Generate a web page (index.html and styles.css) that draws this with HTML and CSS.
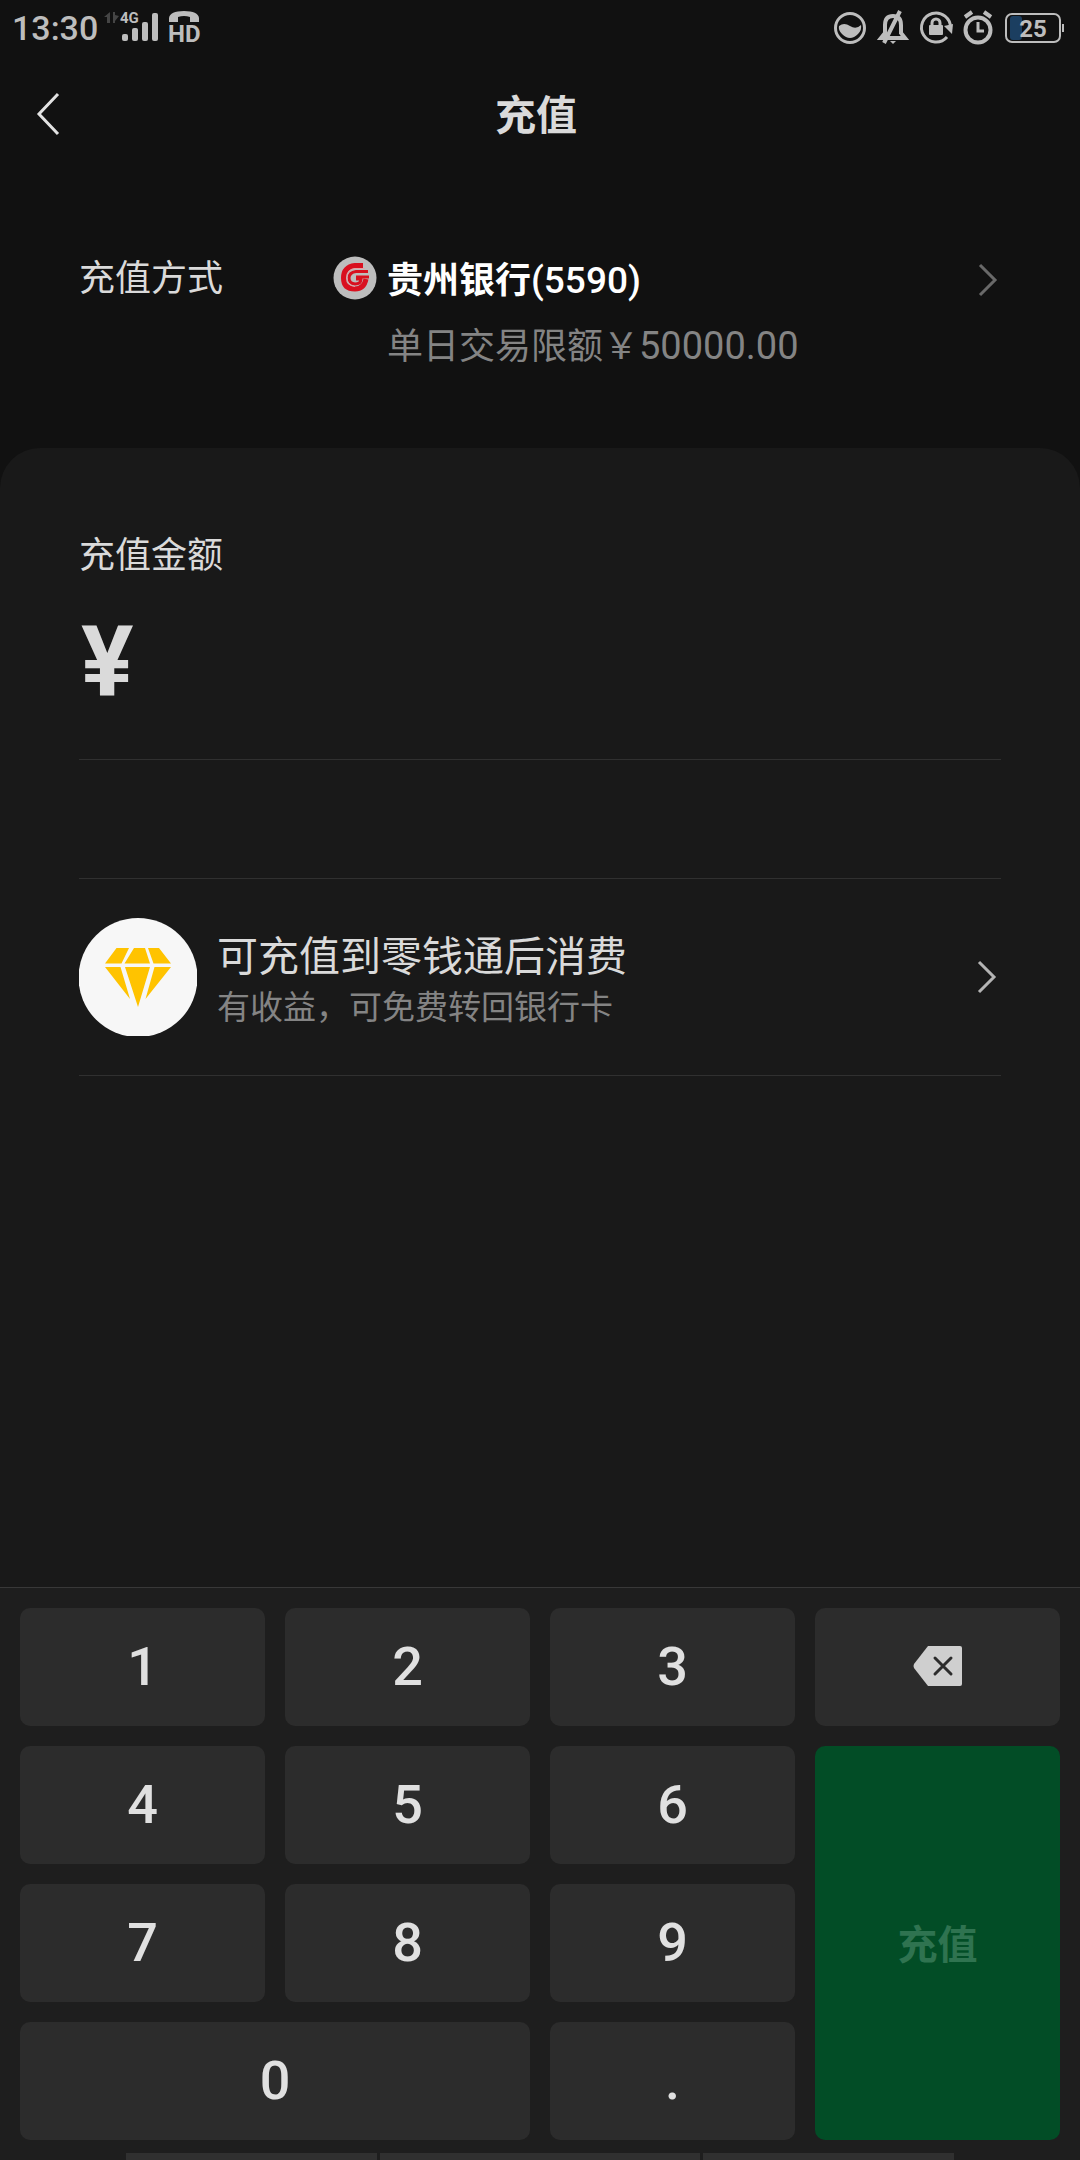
FILE: index.html
```html
<!DOCTYPE html>
<html lang="zh-CN">
<head>
<meta charset="utf-8">
<meta name="viewport" content="width=device-width, initial-scale=1">
<title>充值</title>
<link rel="stylesheet" href="styles.css">
</head>
<body>
<div class="page">
  <div class="status">
    <div class="status-side">
      <span class="clock">13:30</span>
      <svg class="signal" width="110" height="40" viewBox="0 0 110 40">
        <g fill="#454545">
          <path d="M8 4v11H5V9H2zM11 4h2v3l4 1-4 5v2h-2z"/>
        </g>
        <g fill="#bdbdbd">
          <text x="18" y="15" class="net">4G</text>
          <rect x="20" y="26" width="6" height="7" rx="2"/>
          <rect x="30" y="20" width="6" height="13" rx="2"/>
          <rect x="40" y="14" width="6" height="19" rx="2"/>
          <rect x="50" y="5" width="6" height="28" rx="2"/>
          <path d="M67 14v-4q1-7 15-7t15 7v4h-9V9q-6-2-12 0v5z"/>
          <text x="66" y="34" class="hd">HD</text>
        </g>
      </svg>
    </div>
    <div class="status-side">
      <svg class="indicators" width="234" height="40" viewBox="0 0 234 40" fill="none" stroke="#bdbdbd" stroke-width="3">
        <circle cx="20" cy="20" r="14.5"/>
        <path d="M9 18q5-4 11 0t11-1q1 5-3 9t-8 4-8-4-3-8z" fill="#bdbdbd" stroke="none"/>
        <path d="M51 30l4-5V17q0-9 8-9t8 9v8l4 5zM70 3L54 35" stroke-width="4"/>
        <path d="M60 33h6l-3 3z" fill="#bdbdbd" stroke="none"/>
        <path d="M117 29A14.500 14.500 0 1 1 120.500 20"/>
        <path d="M114 18l8 8 1-10z" fill="#bdbdbd" stroke="none"/>
        <rect x="99" y="17" width="14" height="10" rx="1" fill="#bdbdbd" stroke="none"/>
        <path d="M102 18v-3a4 4 0 0 1 8 0v3"/>
        <circle cx="148" cy="22" r="12.500" stroke-width="4"/>
        <path d="M148 14v9h6"/>
        <path d="M135 9l7-5M161 9l-7-5" stroke-width="4"/>
        <rect x="180" y="8" width="12" height="24" rx="3" fill="#1b3e60" stroke="none"/>
        <rect x="176" y="6" width="54" height="28" rx="6" stroke-width="2"/>
        <path d="M233 16v8" stroke-width="2"/>
        <text x="203" y="29" text-anchor="middle" class="battery" fill="#bdbdbd" stroke="none">25</text>
      </svg>
    </div>
  </div>

  <header class="header">
    <button class="back" type="button" aria-label="返回">
      <svg width="24" height="46" viewBox="0 0 24 46" fill="none" stroke="#e2e2e2" stroke-width="3"><path d="M22 3L3 23l19 20"/></svg>
    </button>
    <h1 class="title">充值</h1>
  </header>

  <button class="method" type="button">
    <span class="method-label">充值方式</span>
    <svg class="bank" width="44" height="44" viewBox="0 0 44 44">
      <circle cx="22" cy="22" r="21.500" fill="#bdbdbd"/>
      <g fill="none" stroke="#d9101f">
        <path d="M30 9.500H22Q10.500 11 10.500 22T22 33q9 0 11-10" stroke-width="5"/>
        <path d="M35 15.500H23q-7 1-7 6.500t6 6q6 0 6-5h-5" stroke-width="3"/>
        <path d="M23 21h13" stroke-width="3"/>
      </g>
      <path d="M32 12.500H22q-8 1-8 9 0 8 8 9" fill="none" stroke="#e6a0a4" stroke-width="1"/>
    </svg>
    <span class="method-text">
      <span class="bank-name">贵州银行<span class="digits">(5590)</span></span>
      <span class="limit">单日交易限额￥<span class="digits">50000.00</span></span>
    </span>
    <svg class="chevron" width="24" height="36" viewBox="0 0 24 36" fill="none" stroke="#696969" stroke-width="3"><path d="M3 3l15 15L3 33"/></svg>
  </button>

  <main class="card">
    <label class="amount-label" for="amount">充值金额</label>
    <div class="amount">
      <span class="yen">¥</span>
      <input class="amount-input" id="amount" type="text" inputmode="none">
    </div>
    <a class="promo" href="#">
      <svg class="gem" width="118" height="118" viewBox="0 0 118 118">
        <circle cx="59" cy="59.500" r="59.500" fill="#f7f7f7"/>
        <path fill="#ffc300" d="M37.500 30H50l-7.500 15.500H26zM55 30h11l5 15.500H45.500zM69 30h11l12 15.500H74.500zM26 49h15.500l9.500 32zM46 49h25L59 89zM75.500 49H92L66.500 81z"/>
      </svg>
      <span class="promo-text">
        <span class="promo-title">可充值到零钱通后消费</span>
        <span class="promo-sub">有收益，可免费转回银行卡</span>
      </span>
      <svg class="chevron" width="24" height="36" viewBox="0 0 24 36" fill="none" stroke="#b4b4b4" stroke-width="3"><path d="M2 3l15 15L2 33"/></svg>
    </a>
  </main>

  <section class="keypad" aria-label="数字键盘">
    <button class="key" type="button">1</button>
    <button class="key" type="button">2</button>
    <button class="key" type="button">3</button>
    <button class="key" type="button" aria-label="删除">
      <svg width="50" height="42" viewBox="0 0 50 42">
        <path d="M15 1h32q2 0 2 2v36q0 2-2 2H15L1 23q-1-2 0-4z" fill="#cfcfcf"/>
        <path d="M22 13l16 16M38 13L22 29" stroke="#2c2c2c" stroke-width="3" stroke-linecap="round"/>
      </svg>
    </button>
    <button class="key" type="button">4</button>
    <button class="key" type="button">5</button>
    <button class="key" type="button">6</button>
    <button class="key submit" type="button">充值</button>
    <button class="key" type="button">7</button>
    <button class="key" type="button">8</button>
    <button class="key" type="button">9</button>
    <button class="key zero" type="button">0</button>
    <button class="key" type="button">.</button>
  </section>
  <div class="gesture"><span></span><span></span><span></span></div>
</div>
</body>
</html>
```
FILE: styles.css
```css
* {
  box-sizing: border-box;
}

body {
  margin: 0;
  background: #111;
  color: #dadada;
  font-family: Roboto, "Noto Sans CJK SC", sans-serif;
}

button {
  margin: 0;
  padding: 0;
  border: 0;
  background: none;
  color: inherit;
  font: inherit;
}

svg {
  display: block;
  flex: none;
}

.page {
  display: flex;
  flex-direction: column;
  min-height: 100vh;
}

/* status bar */
.status {
  display: flex;
  justify-content: space-between;
  height: 56px;
  padding: 0 16px 0 12px;
}

.status-side {
  display: flex;
  align-items: center;
}

.clock {
  color: #bdbdbd;
  font-size: 34px;
  font-weight: 500;
  line-height: 56px;
  margin-right: 4px;
}

.net {
  font-size: 15px;
  font-weight: 700;
}

.hd {
  font-size: 24px;
  font-weight: 700;
}

.battery {
  font-size: 24px;
  font-weight: 700;
}

/* title bar */
.header {
  display: grid;
  grid-template-columns: 96px 1fr 104px;
  align-items: center;
  height: 116px;
}

.back {
  display: flex;
  padding-left: 36px;
}

.title {
  margin: 0;
  padding-top: 4px;
  font-size: 41px;
  font-weight: 700;
  line-height: 60px;
  text-align: center;
}

/* payment method */
.method {
  display: flex;
  align-items: flex-start;
  padding: 76px 79px 68px;
  text-align: left;
  font-size: 36px;
  line-height: 66px;
}

.method-label {
  width: 254px;
  line-height: 62px;
}

.bank {
  margin: 8px 10px 0 0;
}

.method-text {
  display: flex;
  flex: 1;
  flex-direction: column;
}

.bank-name {
  color: #fff;
  font-weight: 700;
}

.limit {
  color: #848484;
}

.digits {
  font-size: 38px;
  line-height: 1;
}

.bank-name .digits {
  font-size: 37px;
  font-weight: 500;
}

.method .chevron {
  margin-top: 14px;
}

/* amount card */
.card {
  display: flex;
  flex: 1;
  flex-direction: column;
  padding: 83px 79px 0;
  border-radius: 40px 40px 0 0;
  background: #191919;
}

.amount-label {
  font-size: 36px;
  line-height: 50px;
}

.amount {
  display: flex;
  align-items: center;
  height: 179px;
  padding-bottom: 14px;
  border-bottom: 1px solid #303030;
}

.yen {
  padding-left: 2px;
  font-size: 98px;
  font-weight: 700;
  line-height: 100px;
}

.amount-input {
  flex: 1;
  min-width: 0;
  height: 100px;
  border: 0;
  outline: 0;
  background: none;
  color: inherit;
  font: inherit;
  font-size: 98px;
}

.promo {
  display: flex;
  align-items: center;
  margin-top: 118px;
  padding: 39px 0;
  border-top: 1px solid #303030;
  border-bottom: 1px solid #303030;
  color: inherit;
  text-decoration: none;
}

.promo-text {
  display: flex;
  flex: 1;
  flex-direction: column;
  padding: 10px 0 0 20px;
}

.promo-title {
  font-size: 41px;
  line-height: 52px;
}

.promo-sub {
  color: #848484;
  font-size: 33px;
  line-height: 50px;
}

/* number pad */
.keypad {
  display: grid;
  grid-template-columns: repeat(4, 1fr);
  grid-auto-rows: 118px;
  gap: 20px;
  padding: 20px 20px 13px;
  border-top: 1px solid #383838;
  background: #1e1e1e;
}

.key {
  display: flex;
  align-items: center;
  justify-content: center;
  padding-bottom: 2px;
  border-radius: 10px;
  background: #2c2c2c;
  color: #e0e0e0;
  font-size: 54px;
  font-weight: 500;
}

.submit {
  grid-row: span 3;
  background: #024d26;
  color: #2f7350;
  font-size: 40px;
  font-weight: 700;
}

.zero {
  grid-column: span 2;
}

.gesture {
  display: grid;
  grid-template-columns: 251fr 320fr 251fr;
  gap: 3px;
  height: 7px;
  padding: 0 126px;
  background: #1e1e1e;
}

.gesture span {
  background: #303030;
}
```
